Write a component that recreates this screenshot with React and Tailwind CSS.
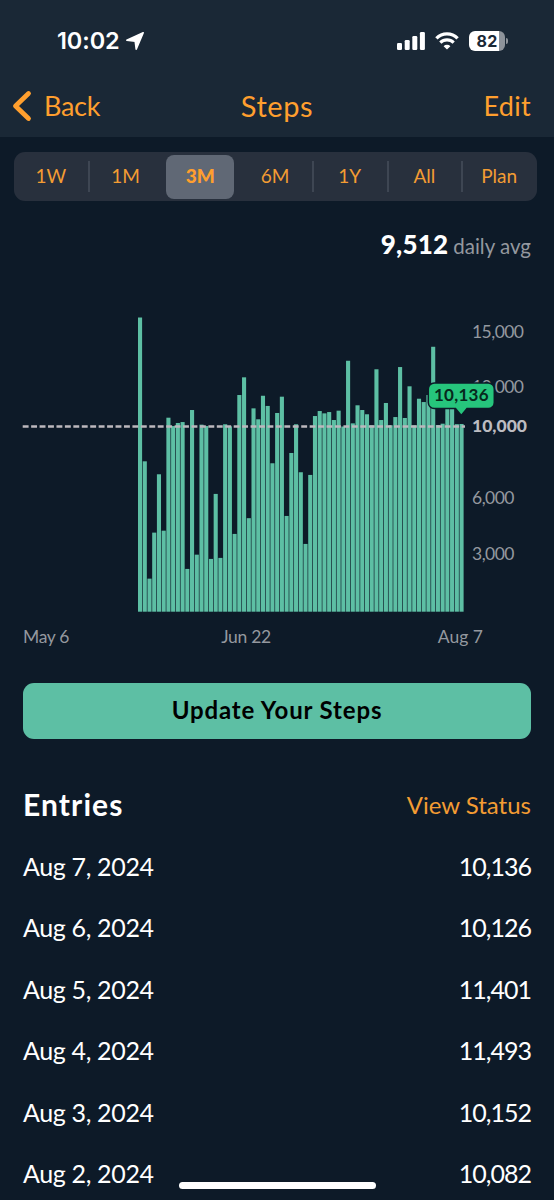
import React, { useState } from 'react';

const RANGES = ['1W', '1M', '3M', '6M', '1Y', 'All', 'Plan'];

const ENTRIES = [
  { date: 'Aug 7, 2024', steps: '10,136' },
  { date: 'Aug 6, 2024', steps: '10,126' },
  { date: 'Aug 5, 2024', steps: '11,401' },
  { date: 'Aug 4, 2024', steps: '11,493' },
  { date: 'Aug 3, 2024', steps: '10,152' },
  { date: 'Aug 2, 2024', steps: '10,082' },
];

// Daily steps, oldest first
const STEPS = [
  15885, 8120, 1785, 4270, 7420, 4375, 10475, 10025, 10190, 10240, 2310, 10890, 3080, 10100, 10025, 2850,
  6360, 2905, 10120, 10010, 4200, 11700, 12655, 5050, 10980, 10390, 11660, 11110, 8015, 10730, 11610, 5170,
  8570, 10120, 7530, 3660, 7385, 10565, 10835, 10710, 10780, 10350, 10855, 10000, 13550, 10170, 11145, 10890,
  10660, 10065, 13090, 10350, 11270, 10065, 10510, 13210, 10460, 12170, 10065, 11500, 11320, 11700, 14305,
  10082, 10152, 11493, 11401, 10126, 10136,
];

const AXIS = [
  { label: '15,000', y: 337.5 },
  { label: '12,000', y: 393 },
  { label: '6,000', y: 504 },
  { label: '3,000', y: 559.5 },
];

const BASE = 611.7;
const PX_PER_STEP = 0.01852;

function StatusBar() {
  return (
    <div className="flex h-[82px] items-center justify-between pr-[46px] pl-[57px]">
      <div className="flex items-center gap-[5px]">
        <span className="font-['Inter'] text-[23.5px] leading-none font-semibold tracking-[-0.1px] text-white">10:02</span>
        <svg width="20" height="20" viewBox="0 0 20 20" fill="#fff" stroke="#fff" strokeWidth="1.6" strokeLinejoin="round">
          <path d="M18.200 1.800 1.800 9.200 10.200 10.200 11.200 18.200Z" />
        </svg>
      </div>
      <div className="flex items-center">
        <svg width="28" height="18" viewBox="0 0 28 18" fill="#fff">
          <rect x="0" y="11" width="5" height="7" rx="1.3" />
          <rect x="7.7" y="8" width="5" height="10" rx="1.3" />
          <rect x="15.3" y="4" width="5" height="14" rx="1.3" />
          <rect x="22.9" y="0" width="5" height="18" rx="1.3" />
        </svg>
        <svg className="ml-[10px]" width="24" height="18" viewBox="0 0 24 18" fill="none" stroke="#fff">
          <path d="M1.400 6.300a15 15 0 0 1 21.200 0" strokeWidth="3.3" />
          <path d="M5.300 10.600a9.500 9.500 0 0 1 13.400 0" strokeWidth="3.1" />
          <path d="M12 17.600 8.600 14.200a4.800 4.800 0 0 1 6.800 0Z" fill="#fff" stroke="none" />
        </svg>
        <div className="ml-[10px] flex items-center">
          <div className="flex h-5 w-9 items-center justify-center rounded-[6px] bg-[linear-gradient(to_right,#fff_82%,#8d939a_82%)]">
            <span className="font-['Inter'] text-[16px] leading-none font-bold tracking-[0.2px] text-[#1a2836]">82</span>
          </div>
          <div className="ml-px h-[6px] w-[2px] rounded-r-full bg-[#8d939a]" />
        </div>
      </div>
    </div>
  );
}

function NavBar() {
  return (
    <div className="grid h-[55px] grid-cols-3 items-start pt-[7px] pr-[23px] pl-[12px] text-[27px] leading-[34px] text-[#ff9f2e]">
      <button className="flex items-center gap-[12px] text-left">
        <svg width="20" height="32" viewBox="0 0 20 32" fill="none" stroke="#ff9f2e" strokeWidth="4.8" strokeLinecap="round" strokeLinejoin="round">
          <path d="M16.500 3.500 3.500 16 16.500 28.500" />
        </svg>
        <span className="tracking-[-0.3px]">Back</span>
      </button>
      <h1 className="pl-[11px] text-center text-[29px] tracking-[0.6px]">Steps</h1>
      <button className="text-right tracking-[0.3px]">Edit</button>
    </div>
  );
}

function RangePicker({ value, onChange }) {
  const selected = RANGES.indexOf(value);

  return (
    <div className="mx-[14px] mt-[15px] mr-[17px] flex h-[49px] rounded-[11px] bg-[#28303d]">
      {RANGES.map((range, i) => (
        <div key={range} className="-ml-px flex flex-1 items-center">
          <div className={`h-[31px] w-[2px] ${i === 0 || i === selected || i === selected + 1 ? 'bg-transparent' : 'bg-[#3e4653]'}`} />
          <button
            onClick={() => onChange(range)}
            className={`mr-[4px] ml-[2px] h-[44px] flex-1 rounded-[8px] text-[19px] text-[#f39c33] ${
              range === value ? 'bg-[#606875] font-black text-[#ff9f2e]' : ''
            }`}
          >
            {range}
          </button>
        </div>
      ))}
    </div>
  );
}

function StepsChart() {
  return (
    <svg className="block" width="554" height="353" viewBox="0 270 554 353">
      {STEPS.map((steps, i) => {
        const h = steps * PX_PER_STEP;
        return <rect key={i} x={138 + i * 4.728} y={BASE - h} width="4.1" height={h} fill="#5dbfa4" />;
      })}

      {/* goal line */}
      <path d="M22.700 426.500H465" stroke="#bcb8bd" strokeWidth="2.7" strokeDasharray="5.900 2.540" />

      <g fontSize="17.5" fill="#94989f">
        {AXIS.map((tick) => (
          <text key={tick.label} x="472" y={tick.y} textLength={tick.label.length === 6 ? 52 : 42.5}>
            {tick.label}
          </text>
        ))}
        <text x="472" y="432.3" fill="#bcbcc1" fontWeight="900" textLength="55">10,000</text>
      </g>

      {/* latest value */}
      <path
        d="M434.300 383H488.300a6 6 0 0 1 6 6V402.500a6 6 0 0 1-6 6H467L461.300 415.500 455.500 408.500H434.300a6 6 0 0 1-6-6V389a6 6 0 0 1 6-6Z"
        fill="#26c57c"
        stroke="#0d1a28"
        strokeWidth="1.5"
      />
      <text x="434" y="401.3" fontSize="17" fontWeight="700" fill="#07291c" textLength="54.5">10,136</text>
    </svg>
  );
}

export default function App() {
  const [range, setRange] = useState('3M');

  return (
    <div className="relative h-[1200px] w-[554px] overflow-hidden bg-[#0d1a28] font-['Lato',sans-serif] text-white">
      <header className="h-[137px] bg-[#1a2836]">
        <StatusBar />
        <NavBar />
      </header>

      <RangePicker value={range} onChange={setRange} />

      <div className="flex h-[69px] items-baseline justify-end gap-[5px] pt-[26px] pr-[23px]">
        <span className="text-[26px] leading-[34px] font-black tracking-[0.2px]">9,512</span>
        <span className="text-[20.5px] leading-[34px] text-[#94989f]">daily avg</span>
      </div>

      <StepsChart />

      <div className="flex h-[28px] items-center justify-between pr-[71px] pl-[23px] text-[17.5px] text-[#94989f]">
        <span className="tracking-[-0.3px]">May 6</span>
        <span className="mr-[15px] tracking-[-0.3px]">Jun 22</span>
        <span>Aug 7</span>
      </div>

      <button className="mt-[32px] ml-[23px] block h-[56px] w-[508px] rounded-[11px] bg-[#5dbfa4] pb-[2px] text-[24px] font-bold tracking-[0.85px] text-black">
        Update Your Steps
      </button>

      <div className="mt-[44px] flex h-[44px] items-center justify-between px-[23px]">
        <h2 className="pb-[2px] text-[30px] font-bold tracking-[1.1px]">Entries</h2>
        <button className="text-[24px] text-[#f39c33]">View Status</button>
      </div>

      <ul className="mt-[9px]">
        {ENTRIES.map((entry) => (
          <li key={entry.date} className="flex h-[61.4px] items-center justify-between px-[23px] text-[25px]">
            <span className="tracking-[-0.35px]">{entry.date}</span>
            <span className="tracking-[-1px]">{entry.steps}</span>
          </li>
        ))}
      </ul>

      {/* home indicator */}
      <div className="absolute bottom-[11px] left-[179px] h-[7px] w-[197px] rounded-full bg-white" />
    </div>
  );
}
